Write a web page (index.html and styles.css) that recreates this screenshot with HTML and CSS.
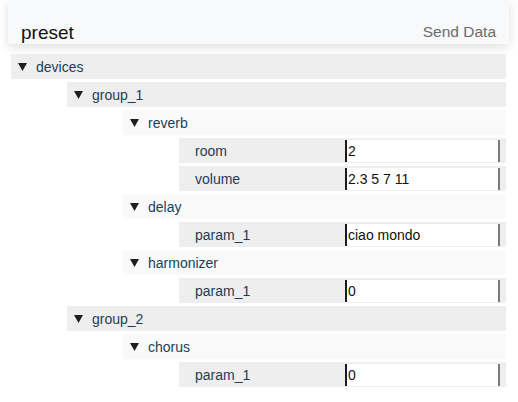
FILE: index.html
```html
<!DOCTYPE html>
<html>
<head>
<meta charset="utf-8">
<link rel="stylesheet" href="styles.css">
</head>
<body>
<header class="topbar">
  <span class="title">preset</span>
  <span class="send">Send Data</span>
</header>
<div class="tree">
  <div class="node">
    <div class="row row-dark"><svg class="tri" viewBox="0 0 9 8"><polygon points="0,0 9,0 4.5,8"/></svg><span class="name">devices</span></div>
    <div class="children">
      <div class="node">
        <div class="row row-dark"><svg class="tri" viewBox="0 0 9 8"><polygon points="0,0 9,0 4.5,8"/></svg><span class="name">group_1</span></div>
        <div class="children">
          <div class="node">
            <div class="row row-light"><svg class="tri" viewBox="0 0 9 8"><polygon points="0,0 9,0 4.5,8"/></svg><span class="name">reverb</span></div>
            <div class="children">
              <div class="leaf"><span class="label">room</span><input class="field" value="2"></div>
              <div class="leaf"><span class="label">volume</span><input class="field" value="2.3 5 7 11"></div>
            </div>
          </div>
          <div class="node">
            <div class="row row-light"><svg class="tri" viewBox="0 0 9 8"><polygon points="0,0 9,0 4.5,8"/></svg><span class="name">delay</span></div>
            <div class="children">
              <div class="leaf"><span class="label">param_1</span><input class="field" value="ciao mondo"></div>
            </div>
          </div>
          <div class="node">
            <div class="row row-light"><svg class="tri" viewBox="0 0 9 8"><polygon points="0,0 9,0 4.5,8"/></svg><span class="name">harmonizer</span></div>
            <div class="children">
              <div class="leaf"><span class="label">param_1</span><input class="field" value="0"></div>
            </div>
          </div>
        </div>
      </div>
      <div class="node">
        <div class="row row-dark"><svg class="tri" viewBox="0 0 9 8"><polygon points="0,0 9,0 4.5,8"/></svg><span class="name">group_2</span></div>
        <div class="children">
          <div class="node">
            <div class="row row-light"><svg class="tri" viewBox="0 0 9 8"><polygon points="0,0 9,0 4.5,8"/></svg><span class="name">chorus</span></div>
            <div class="children">
              <div class="leaf"><span class="label">param_1</span><input class="field" value="0"></div>
            </div>
          </div>
        </div>
      </div>
    </div>
  </div>
</div>
</body>
</html>
```
FILE: styles.css
```css
html, body {
  margin: 0;
  padding: 0;
  background: #ffffff;
}
body {
  padding: 0 8px;
  font-family: "Liberation Sans", Arial, sans-serif;
}
.topbar {
  height: 44px;
  background: #f8f9fa;
  box-shadow: 0 3px 10px rgba(0, 0, 0, 0.13);
  display: flex;
  align-items: flex-end;
  justify-content: space-between;
  padding: 0 13px 0 13px;
  box-sizing: border-box;
  margin-right: 1px;
}
.title {
  font-size: 19px;
  line-height: 22px;
  color: #111;
}
.send {
  font-size: 15.5px;
  line-height: 18px;
  padding-bottom: 3px;
  color: #6c6c6c;
}
.tree {
  padding: 10px 4px 0 3px;
}
.node, .children {
  display: flex;
  flex-direction: column;
  gap: 3px;
}
.children {
  margin-left: 56px;
}
.row {
  height: 25px;
  display: flex;
  align-items: center;
  padding-left: 7px;
  box-sizing: border-box;
}
.row-dark { background: #eeeeee; }
.row-light { background: #f9f9f9; }
.tri {
  width: 9px;
  height: 8px;
  fill: #1e1e1e;
  margin-right: 9px;
  margin-top: 1px;
  flex: none;
}
.name, .label {
  font-size: 14px;
  color: #1f3d57;
}
.leaf {
  height: 25px;
  display: flex;
  align-items: center;
  background: #eeeeee;
  padding-right: 6px;
  box-sizing: border-box;
}
.label {
  width: 166px;
  padding-left: 16px;
  box-sizing: border-box;
  flex: none;
}
.field {
  flex: 1;
  min-width: 0;
  height: 22px;
  box-sizing: border-box;
  border: none;
  border-left: 2px solid #1a1a1a;
  border-right: 2px solid #7a7a7a;
  background: #fff;
  font-family: "Liberation Sans", Arial, sans-serif;
  font-size: 14px;
  color: #111;
  padding: 0 0 0 1px;
  margin: 0;
  outline: none;
}
```
